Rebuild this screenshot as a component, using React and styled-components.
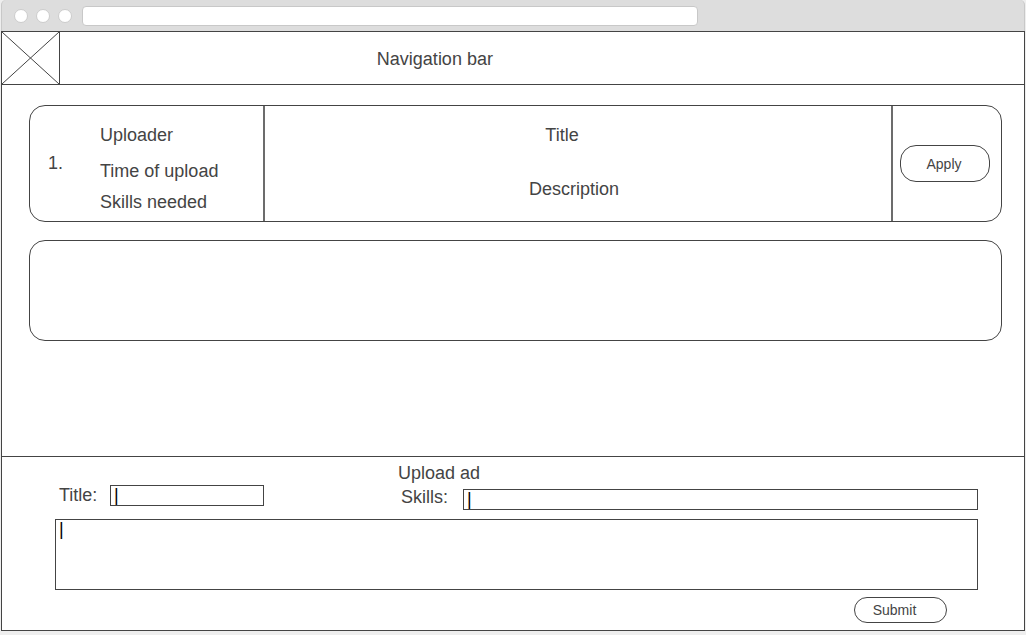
import React from "react";
import styled, { createGlobalStyle } from "styled-components";

const ink = "#444444";

const GlobalStyle = createGlobalStyle`
  *, *::before, *::after { box-sizing: border-box; }
  body {
    margin: 0;
    background: #eeeeee;
    color: ${ink};
    font: 18px/20px "Liberation Sans", Arial, sans-serif;
  }
  h1, h2, h3, p { margin: 0; font: inherit; }
`;

const Browser = styled.div`
  margin: 0 1px 4px;
`;

const Chrome = styled.header`
  display: flex;
  align-items: center;
  height: 31px;
  padding-left: 12px;
  background: #dddddd;
  border: solid #c8c8c8;
  border-width: 0 1px;
  border-radius: 5px 5px 0 0;
`;

const Dots = styled.div`
  display: flex;
  gap: 8px;
  margin-right: 10px;
`;

const Dot = styled.span`
  width: 14px;
  height: 14px;
  border: 1px solid #cccccc;
  border-radius: 50%;
  background: #ffffff;
`;

const Address = styled.input`
  width: 61%;
  height: 20px;
  padding: 0 6px;
  border: 1px solid #c8c8c8;
  border-radius: 4px;
  background: #ffffff;
  outline: none;
`;

const Page = styled.div`
  background: #ffffff;
  border: 1px solid ${ink};
`;

const NavBar = styled.nav`
  display: grid;
  grid-template-columns: 58px 7fr 2fr;
  align-items: center;
  border-bottom: 1px solid ${ink};
`;

const Logo = styled.svg`
  display: block;
  width: 58px;
  height: 52px;
  border-right: 1px solid ${ink};
`;

const NavTitle = styled.h1`
  padding-top: 2px;
  text-align: center;
`;

const Listings = styled.main`
  display: flex;
  flex-direction: column;
  gap: 18px;
  padding: 20px 22px 115px 27px;
`;

const Card = styled.article`
  display: grid;
  grid-template-columns: 235px 1fr 108px;
  min-height: ${(p) => p.$height};
  border: 1px solid ${ink};
  border-radius: 16px;
`;

const Meta = styled.div`
  display: grid;
  grid-template-columns: 52px 1fr;
  align-items: center;
  padding-left: 18px;
  border-right: 2px solid #6c6c6c;
`;

const Rank = styled.p`
  padding-bottom: 2px;
`;

const MetaLines = styled.div`
  display: flex;
  flex-direction: column;
  gap: 11px;
  padding-top: 10px;
`;

const Uploader = styled.p`
  padding-bottom: 5px;
`;

const Summary = styled.div`
  display: flex;
  flex-direction: column;
  gap: 34px;
  padding-top: 19px;
  text-align: center;
  border-right: 2px solid #6c6c6c;
`;

const SummaryTitle = styled.h2`
  padding-right: 32px;
`;

const SummaryText = styled.p`
  padding-right: 8px;
`;

const Action = styled.div`
  display: flex;
  align-items: center;
  padding-left: 7px;
`;

const Button = styled.button`
  width: ${(p) => p.$width};
  height: ${(p) => p.$height};
  padding: 0 ${(p) => p.$inset} 0 0;
  border: 1px solid ${ink};
  border-radius: 16px;
  background: #ffffff;
  color: ${ink};
  font: 14px/16px "Liberation Sans", Arial, sans-serif;
`;

const AdForm = styled.form`
  display: flex;
  flex-direction: column;
  padding: 6px 46px 7px 53px;
  border-top: 1px solid ${ink};
`;

const FieldRow = styled.div`
  display: grid;
  grid-template-columns: 209px 1fr;
  column-gap: 134px;
  align-items: end;
`;

const SkillsGroup = styled.div`
  display: flex;
  flex-direction: column;
  gap: 6px;
`;

const Field = styled.div`
  display: grid;
  grid-template-columns: ${(p) => p.$label} 1fr;
  align-items: start;
  padding-bottom: ${(p) => p.$lift || 0};
`;

const Label = styled.label`
  line-height: ${(p) => p.$line};
  padding-left: ${(p) => p.$inset};
`;

const TextInput = styled.input`
  min-width: 0;
  width: 100%;
  height: 21px;
  padding: 0 3px;
  border: 1px solid ${ink};
  background: #ffffff;
  color: #000000;
  font: inherit;
  line-height: 19px;
  outline: none;
`;

const TextBox = styled.textarea`
  display: block;
  width: 100%;
  height: 71px;
  margin: 9px 0 7px;
  padding: 0 3px;
  border: 1px solid ${ink};
  border-radius: 0;
  background: #ffffff;
  color: #000000;
  font: inherit;
  line-height: 18px;
  resize: none;
  outline: none;
`;

const Submit = styled.div`
  display: flex;
  justify-content: flex-end;
  padding-right: 31px;
`;

export default function App() {
  return (
    <>
      <GlobalStyle />
      <Browser>
        <Chrome>
          <Dots>
            <Dot />
            <Dot />
            <Dot />
          </Dots>
          <Address aria-label="Address" />
        </Chrome>
        <Page>
          <NavBar>
            <Logo viewBox="0 0 57 52" preserveAspectRatio="none" aria-hidden="true">
              <path d="M0 0L57 52M57 0L0 52" stroke={ink} strokeWidth="1" fill="none" />
            </Logo>
            <NavTitle>Navigation bar</NavTitle>
          </NavBar>
          <Listings>
            <Card $height="117px">
              <Meta>
                <Rank>1.</Rank>
                <MetaLines>
                  <Uploader>Uploader</Uploader>
                  <p>Time of upload</p>
                  <p>Skills needed</p>
                </MetaLines>
              </Meta>
              <Summary>
                <SummaryTitle>Title</SummaryTitle>
                <SummaryText>Description</SummaryText>
              </Summary>
              <Action>
                <Button type="button" $width="90px" $height="37px" $inset="2px">
                  Apply
                </Button>
              </Action>
            </Card>
            <Card $height="101px" />
          </Listings>
          <AdForm onSubmit={(e) => e.preventDefault()}>
            <FieldRow>
              <Field $label="55px" $lift="4px">
                <Label htmlFor="ad-title" $inset="4px" $line="20px">Title:</Label>
                <TextInput id="ad-title" defaultValue="|" />
              </Field>
              <SkillsGroup>
                <h2>Upload ad</h2>
                <Field $label="65px">
                  <Label htmlFor="ad-skills" $inset="3px" $line="16px">Skills:</Label>
                  <TextInput id="ad-skills" defaultValue="|" />
                </Field>
              </SkillsGroup>
            </FieldRow>
            <TextBox aria-label="Description" defaultValue="|" />
            <Submit>
              <Button type="submit" $width="93px" $height="26px" $inset="12px">
                Submit
              </Button>
            </Submit>
          </AdForm>
        </Page>
      </Browser>
    </>
  );
}
